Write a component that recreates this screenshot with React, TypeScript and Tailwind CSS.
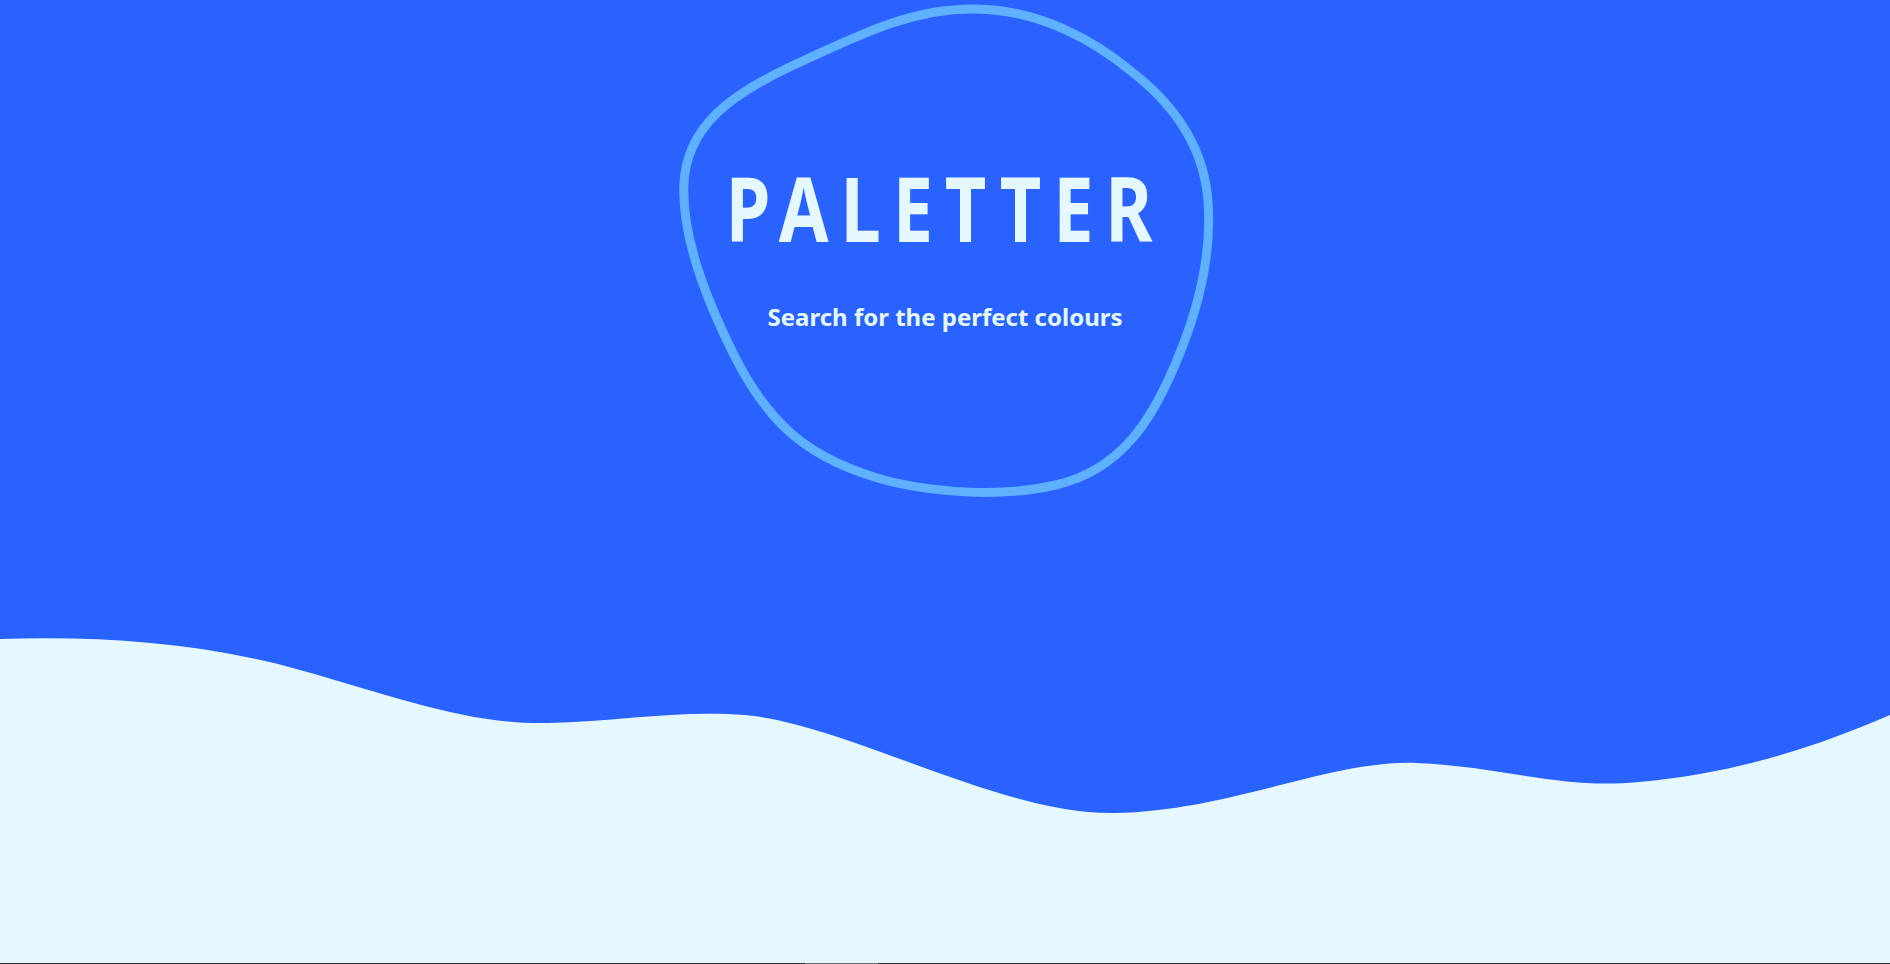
const BLOB =
  "M 277 9 C 220 8, 175 32, 110 65 C 55 93, 10 125, 9 187 C 8 240, 30 300, 55 355 C 85 420, 120 460, 200 482 C 240 492, 300 498, 350 485 C 410 470, 440 420, 465 350 C 485 295, 492 250, 490 207 C 488 155, 465 110, 420 72 C 385 40, 335 10, 277 9 Z";

const WAVE =
  "M 0 9 C 100 6, 200 12, 300 40 C 400 68, 470 95, 548 93 C 620 91, 680 80, 745 85 C 850 95, 1000 185, 1115 183 C 1230 181, 1330 130, 1416 133 C 1500 136, 1560 160, 1639 152 C 1740 143, 1820 115, 1890 85 L 1890 333 L 0 333 Z";

function Hero() {
  return (
    <section className="flex h-[630px] justify-center bg-[#2962ff]">
      <div className="relative flex h-[502px] w-[540px] flex-col items-center">
        <svg
          className="absolute inset-0"
          width="540"
          height="502"
          viewBox="0 0 540 502"
          fill="none"
        >
          <path
            d={BLOB}
            transform="matrix(1.0905 0 0 1 -1 0)"
            stroke="#5fb0ff"
            strokeWidth="9"
            vectorEffect="non-scaling-stroke"
          />
        </svg>
        <h1 className="relative mt-[162px] scale-x-[0.8] whitespace-nowrap text-[90px] font-bold leading-none tracking-[0.165em] text-[#e6f8ff] [font-family:'Noto_Sans',sans-serif]">
          PALETTER
        </h1>
        <p className="relative mt-[53px] text-[24px] font-bold leading-none text-[#e6f8ff] [font-family:'Noto_Sans',sans-serif]">
          Search for the perfect colours
        </p>
      </div>
    </section>
  );
}

export default function App() {
  return (
    <div className="flex h-[964px] w-full flex-col overflow-hidden bg-[#e6f8ff]">
      <Hero />
      <svg
        className="block bg-[#2962ff]"
        width="100%"
        height="333"
        viewBox="0 0 1890 333"
        preserveAspectRatio="none"
      >
        <path d={WAVE} fill="#e6f8ff" />
      </svg>
      <div className="flex h-px bg-[#2b2f33]">
        <div className="ml-[805px] w-[73px] bg-[#6b6e70]" />
      </div>
    </div>
  );
}
